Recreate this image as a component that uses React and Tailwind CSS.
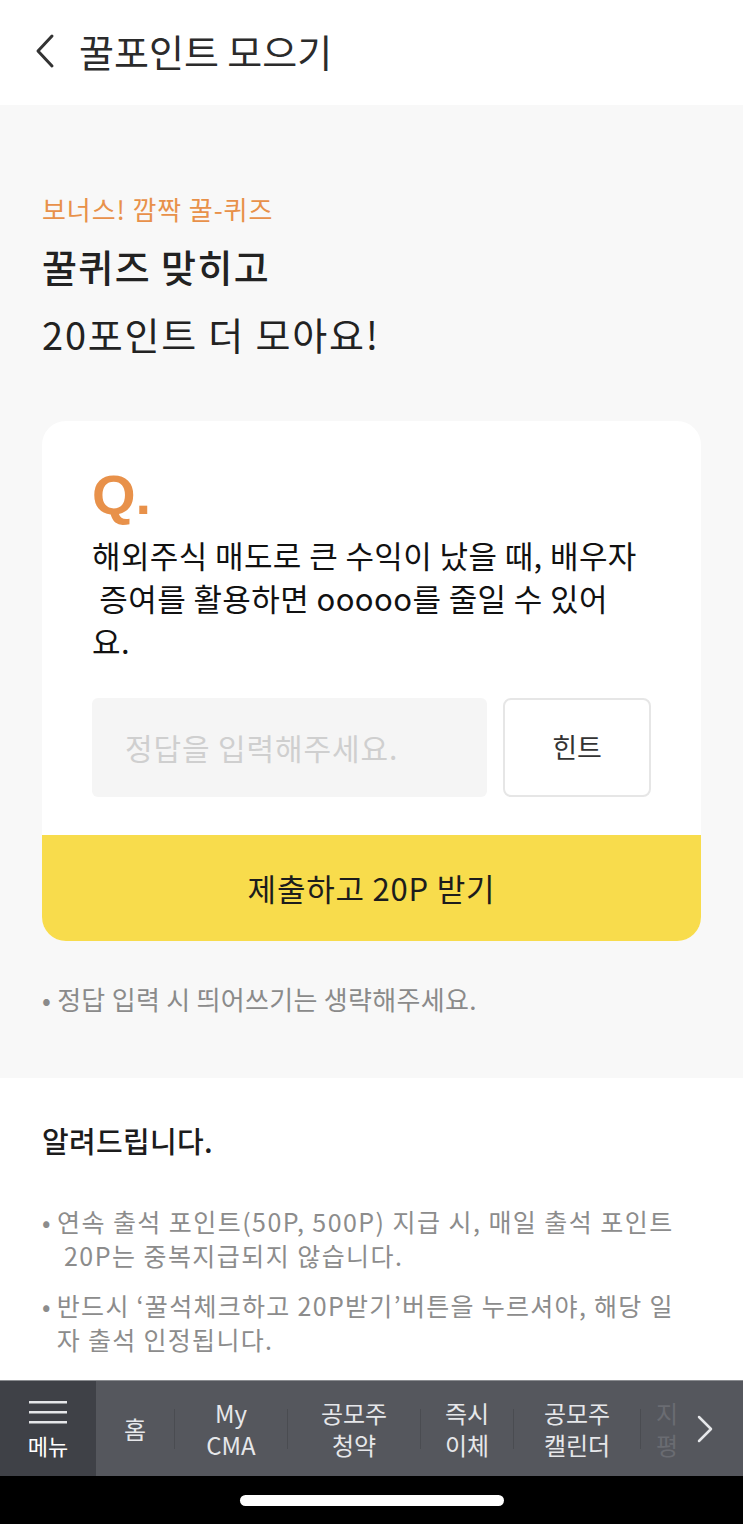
import React from "react";

const F = { fontFamily: '"Noto Sans CJK KR", "Noto Sans", sans-serif' };

function NavItem({ top, bottom, faded }) {
  return (
    <div className={`flex flex-col items-center justify-center text-[24px] ${faded ? "text-[#6a6c72]" : "text-[#e6e7ea]"}`}>
      <span className="block leading-[32px] h-[32px]">{top}</span>
      {bottom && <span className="block leading-[32px] h-[32px]">{bottom}</span>}
    </div>
  );
}

function Sep() {
  return <div className="w-px h-[40px] bg-[#4a4c51]" />;
}

export default function App() {
  return (
    <div style={F} className="w-[743px] h-[1524px] flex flex-col bg-white overflow-hidden">
      {/* header */}
      <div className="h-[105px] flex items-center px-[33px] pb-[4px] bg-white shrink-0">
        <svg width="24" height="36" viewBox="0 0 24 36" fill="none" className="mr-[22px]">
          <path d="M19 3 L5 18 L19 33" stroke="#333" strokeWidth="3" strokeLinecap="round" strokeLinejoin="round" />
        </svg>
        <span className="text-[38px] text-[#2b2b2b] tracking-[0px]">꿀포인트 모으기</span>
      </div>

      {/* gray section */}
      <div className="bg-[#f8f8f8] h-[973px] shrink-0 px-[42px] pt-[86px]">
        <div className="text-[26px] leading-[36px] text-[#e8914a] tracking-[0.9px]">보너스! 깜짝 꿀-퀴즈</div>
        <div className="mt-[16px] text-[38px] leading-[46px] font-medium text-[#222] tracking-[1.4px]">꿀퀴즈 맞히고</div>
        <div className="mt-[22px] text-[38px] leading-[46px] text-[#222] tracking-[1.8px]">20포인트 더 모아요!</div>

        <div className="mt-[64px] w-[659px] rounded-[24px] bg-white overflow-hidden">
          <div className="px-[50px] pt-[42px] pb-[38px]">
            <div className="text-[56px] leading-[64px] font-bold text-[#e8914a]" style={{ fontFamily: '"Liberation Sans", Arial, sans-serif' }}>Q.</div>
            <div className="mt-[6px] text-[31px] leading-[43px] text-[#111] tracking-[0.4px]">
              해외주식 매도로 큰 수익이 났을 때, 배우자<br />
              &nbsp;증여를 활용하면 ooooo를 줄일 수 있어<br />
              요.
            </div>
            <div className="mt-[36px] flex gap-[16px]">
              <div className="w-[395px] h-[99px] rounded-[6px] bg-[#f5f5f5] flex items-center px-[33px] text-[30px] text-[#cfcfcf] tracking-[0.9px]">정답을 입력해주세요.</div>
              <div className="w-[148px] h-[99px] rounded-[8px] border-2 border-[#e6e6e6] flex items-center justify-center text-[27px] text-[#333]">힌트</div>
            </div>
          </div>
          <div className="h-[106px] bg-[#f8dc4c] flex items-center justify-center text-[31px] text-[#1c1c1c] tracking-[0.8px]">제출하고 20P 받기</div>
        </div>

        <div className="mt-[40px] text-[26px] leading-[36px] text-[#8a8a8a] flex gap-[6px] tracking-[0.3px]">
          <span>•</span><span>정답 입력 시 띄어쓰기는 생략해주세요.</span>
        </div>
      </div>

      {/* notice */}
      <div className="bg-white flex-1 px-[42px] pt-[42px]">
        <div className="text-[29px] leading-[40px] font-medium text-[#1c1c1c] tracking-[0.3px]">알려드립니다.</div>
        <div className="mt-[44px] text-[25px] leading-[34px] text-[#8c8c8c] flex gap-[5px] tracking-[1.45px]">
          <span>•</span>
          <span>연속 출석 포인트(50P, 500P) 지급 시, 매일 출석 포인트<br />&nbsp;20P는 중복지급되지 않습니다.</span>
        </div>
        <div className="mt-[16px] text-[25px] leading-[34px] text-[#8c8c8c] flex gap-[5px] tracking-[1.3px]">
          <span>•</span>
          <span>반드시 ‘꿀석체크하고 20P받기’버튼을 누르셔야, 해당 일<br />자 출석 인정됩니다.</span>
        </div>
      </div>

      {/* bottom nav */}
      <div className="h-[96px] shrink-0 bg-[#55575d] flex items-stretch border-t border-[#8a8c90]">
        <div className="w-[96px] bg-[#3f4147] flex flex-col items-center justify-center">
          <svg width="40" height="28" viewBox="0 0 40 28">
            <rect x="1" y="2" width="38" height="2.5" fill="#e6e7ea" />
            <rect x="1" y="12" width="38" height="2.5" fill="#e6e7ea" />
            <rect x="1" y="22" width="38" height="2.5" fill="#e6e7ea" />
          </svg>
          <span className="text-[22px] leading-[28px] text-white mt-[4px]">메뉴</span>
        </div>
        <div className="flex-1 flex items-center">
          <div className="w-[78px] flex justify-center"><NavItem top="홈" /></div>
          <Sep />
          <div className="w-[112px] flex justify-center"><NavItem top="My" bottom="CMA" /></div>
          <Sep />
          <div className="w-[132px] flex justify-center"><NavItem top="공모주" bottom="청약" /></div>
          <Sep />
          <div className="w-[92px] flex justify-center"><NavItem top="즉시" bottom="이체" /></div>
          <Sep />
          <div className="w-[126px] flex justify-center"><NavItem top="공모주" bottom="캘린더" /></div>
          <Sep />
          <div className="w-[52px] flex justify-center"><NavItem top="지" bottom="평" faded /></div>
          <svg width="20" height="32" viewBox="0 0 20 32" className="ml-[2px]">
            <path d="M4 4 L16 16 L4 28" stroke="#e6e7ea" strokeWidth="2.5" fill="none" strokeLinecap="round" strokeLinejoin="round" />
          </svg>
        </div>
      </div>
      <div className="h-[48px] shrink-0 bg-black flex items-center justify-center">
        <div className="w-[264px] h-[11px] rounded-full bg-white" />
      </div>
    </div>
  );
}
